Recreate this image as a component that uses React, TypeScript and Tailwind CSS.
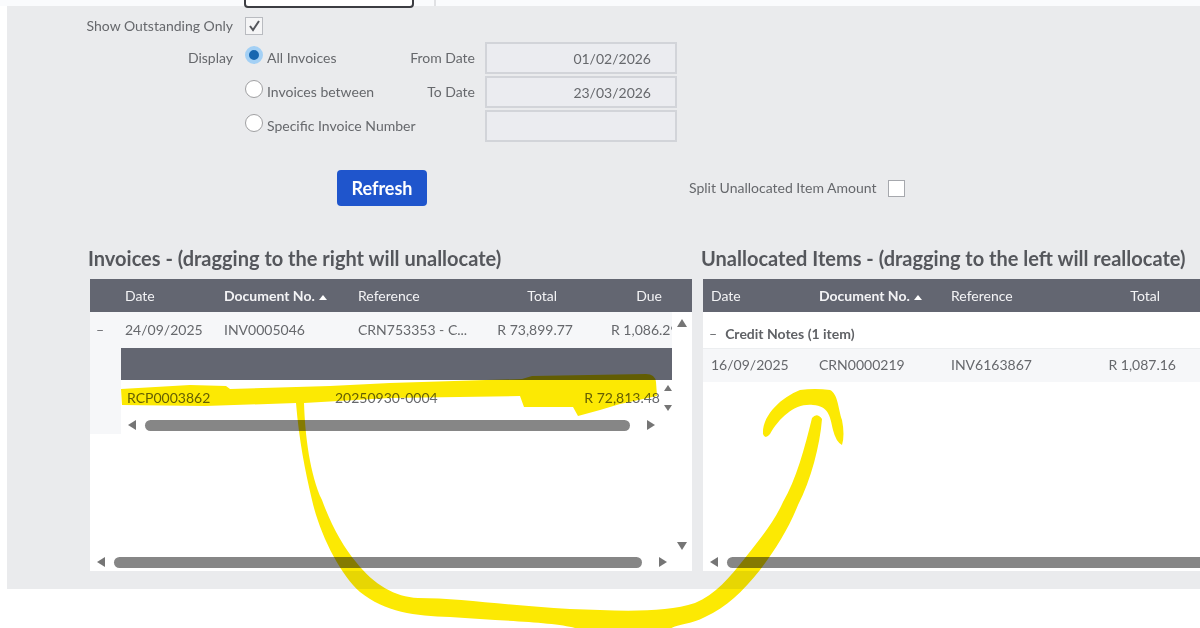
import type { ReactNode } from 'react';

type Direction = 'left' | 'right' | 'up' | 'down';

const arrows: Record<Direction, string> = {
  left: 'M9 0 L9 10 L1 5 Z',
  right: 'M1 0 L1 10 L9 5 Z',
  up: 'M0 9 L10 9 L5 1 Z',
  down: 'M0 1 L10 1 L5 9 Z',
};

const Arrow = ({ direction }: { direction: Direction }) => (
  <svg viewBox="0 0 10 10" className="size-2.5 shrink-0 fill-[#757575]">
    <path d={arrows[direction]} />
  </svg>
);

const HorizontalScroll = ({ className }: { className: string }) => (
  <div className={`flex h-[18px] items-center ${className}`}>
    <Arrow direction="left" />
    <div className="mr-4 ml-2 h-[11px] flex-1 rounded-full bg-[#868686]" />
    <Arrow direction="right" />
  </div>
);

const SortIcon = () => (
  <svg viewBox="0 0 8 6" className="ml-1 inline-block h-1.5 w-2 fill-white">
    <path d="M0 6 L4 1 L8 6 Z" />
  </svg>
);

const DateField = ({
  id,
  label,
  value,
}: {
  id: string;
  label: string;
  value: string;
}) => (
  <div className="grid grid-cols-[92px_192px] items-center gap-x-2.5">
    <label htmlFor={id} className="text-right">
      {label}
    </label>
    <input
      id={id}
      type="text"
      aria-label={label || 'Invoice number'}
      defaultValue={value}
      className="h-8 w-full border-2 border-[#d2d4d9] bg-[#ebecf0] pr-6 text-right"
    />
  </div>
);

const DisplayOption = ({
  label,
  checked,
}: {
  label: string;
  checked?: boolean;
}) => (
  <label className="flex items-center gap-1 pl-3 whitespace-nowrap">
    <input
      type="radio"
      name="display"
      defaultChecked={checked}
      className="mb-1.5 size-[18px] shrink-0 appearance-none rounded-full border border-[#a0a0a2] bg-white checked:border-4 checked:border-[#a3d0f5] checked:bg-[#1767b0]"
    />
    {label}
  </label>
);

const Panel = ({ title, children }: { title: string; children: ReactNode }) => (
  <section className="min-w-0">
    <h2 className="mb-[9px] text-xl leading-6 font-bold whitespace-nowrap text-[#55575c]">
      {title}
    </h2>
    <div className="ml-0.5 flex h-[292px] flex-col bg-white">{children}</div>
  </section>
);

const InvoiceColumns = () => (
  <colgroup>
    <col className="w-[35px]" />
    <col className="w-[99px]" />
    <col className="w-[134px]" />
    <col />
    <col className="w-[104px]" />
    <col className="w-[99px]" />
  </colgroup>
);

const InvoicesGrid = () => (
  <>
    <div className="bg-[#636671] pr-5">
      <table className="w-full table-fixed text-left text-[#f3f3f5]">
        <InvoiceColumns />
        <thead>
          <tr className="h-[33px]">
            <th />
            <th className="font-normal">Date</th>
            <th className="font-bold">
              Document No.
              <SortIcon />
            </th>
            <th className="font-normal">Reference</th>
            <th className="pr-4 text-right font-normal">Total</th>
            <th className="pr-2.5 text-right font-normal">Due</th>
          </tr>
        </thead>
      </table>
    </div>
    <div className="flex flex-1">
      <div className="min-w-0 flex-1">
        <table className="w-full table-fixed bg-[#f6f7f9] whitespace-nowrap">
          <InvoiceColumns />
          <tbody>
            <tr className="h-9">
              <td className="pl-1.5">
                <button type="button" aria-label="Collapse">
                  –
                </button>
              </td>
              <td>24/09/2025</td>
              <td>INV0005046</td>
              <td>CRN753353 - C...</td>
              <td className="text-right">R 73,899.77</td>
              <td className="overflow-hidden pl-[38px]">R 1,086.29</td>
            </tr>
            <tr>
              <td />
              <td colSpan={5}>
                <AllocationGrid />
              </td>
            </tr>
          </tbody>
        </table>
      </div>
      <div className="flex w-5 flex-col items-center justify-between pt-1.5 pb-0.5">
        <Arrow direction="up" />
        <Arrow direction="down" />
      </div>
    </div>
    <HorizontalScroll className="mr-6 ml-1.5" />
  </>
);

const AllocationGrid = () => (
  <div className="-ml-1 bg-white">
    <div className="h-8 bg-[#636671]" />
    <div className="flex h-9">
      <table className="flex-1 table-fixed">
        <tbody>
          <tr>
            <td className="w-[214px] pl-1.5">RCP0003862</td>
            <td>20250930-0004</td>
            <td className="text-right">R 72,813.48</td>
          </tr>
        </tbody>
      </table>
      <div className="flex w-3 flex-col items-end justify-center gap-3">
        <svg viewBox="0 0 8 8" className="size-2 fill-[#757575]">
          <path d="M0 7 L4 1 L8 7 Z" />
        </svg>
        <svg viewBox="0 0 8 8" className="size-2 fill-[#757575]">
          <path d="M0 1 L8 1 L4 7 Z" />
        </svg>
      </div>
    </div>
    <HorizontalScroll className="mr-4 ml-1.5" />
  </div>
);

const ItemsGrid = () => (
  <>
    <table className="w-full table-fixed text-left">
      <colgroup>
        <col className="w-[116px]" />
        <col className="w-[132px]" />
        <col />
        <col className="w-[112px]" />
      </colgroup>
      <thead className="bg-[#636671] text-[#f3f3f5]">
        <tr className="h-[33px]">
          <th className="pl-2 font-normal">Date</th>
          <th className="font-bold">
            Document No.
            <SortIcon />
          </th>
          <th className="font-normal">Reference</th>
          <th className="pr-10 text-right font-normal">Total</th>
        </tr>
      </thead>
      <tbody>
        <tr className="h-9 border-b border-[#eceef0]">
          <td colSpan={4} className="pt-2 pl-1.5 font-bold text-[#606266]">
            <button
              type="button"
              aria-label="Collapse"
              className="mr-2 font-normal"
            >
              –
            </button>
            Credit Notes (1 item)
          </td>
        </tr>
        <tr className="h-[34px] bg-[#f6f7f9]">
          <td className="pl-2">16/09/2025</td>
          <td>CRN0000219</td>
          <td>INV6163867</td>
          <td className="pr-6 text-right">R 1,087.16</td>
        </tr>
      </tbody>
    </table>
    <div className="mt-auto flex h-[18px] items-center pl-1.5">
      <Arrow direction="left" />
      <div className="ml-2 h-[11px] flex-1 rounded-l-full bg-[#868686]" />
    </div>
  </>
);

// Highlighter strokes: marked receipt row, and the arrow to the credit notes
const Marker = () => (
  <svg
    width="1200"
    height="628"
    viewBox="0 0 1200 628"
    className="pointer-events-none absolute top-0 left-0 fill-[#fce903] mix-blend-multiply"
  >
    <path d="M121 389 L190 385 L226 386 L230 389 L330 386 L390 383 L522 379 L532 376 L646 374 Q655 374 656 382 L657 396 L620 404 L600 410 L578 416 L573 407 L524 407 L520 396 L390 398 L304 403 C305 435 310 475 322 500 C331 525 344 548 356 562 C374 585 395 597 418 598 C460 598 510 606 570 609 C620 611 665 613 695 603 C715 595 730 577 745 558 C762 537 775 520 783 502 C796 480 805 447 812 418 Q817 412 822 419 C820 445 811 480 798 505 C788 530 775 550 760 570 C742 592 727 607 705 617 C690 625 676 624 670 629 L578 629 C560 622 500 621 450 617 C415 616 385 612 360 592 C340 574 320 535 312 500 C305 470 299 440 296 403 L205 406 L122 405 Z" />
    <path d="M763 434 C762 415 782 397 800 390 Q815 388 830 390 C838 394 838 408 842 420 Q845 435 842 445 Q836 442 833 430 C830 415 828 406 813 405 C795 403 780 417 770 434 Q765 440 763 434 Z" />
  </svg>
);

const App = () => {
  return (
    <div className="relative isolate min-h-screen overflow-hidden bg-white font-[Lato,sans-serif] text-sm leading-5 text-[#66686c]">
      <header className="flex h-1.5 items-end bg-[#fafbfd] pl-[244px]">
        <input
          type="text"
          aria-label="Account"
          className="z-10 -mb-0.5 h-8 w-[170px] rounded-sm border-2 border-[#3c3d42] bg-white"
        />
        <div className="h-8 w-[22px] border-r-2 border-[#e0e1e4]" />
      </header>
      <main className="ml-[7px] bg-[#eaebed] pt-2.5 pb-[18px]">
        <form>
          <div className="grid grid-cols-[226px_1fr] items-center gap-x-3">
            <label htmlFor="outstanding" className="text-right">
              Show Outstanding Only
            </label>
            <span className="grid size-[18px]">
              <input
                id="outstanding"
                type="checkbox"
                defaultChecked
                className="col-start-1 row-start-1 appearance-none border border-[#b9bbc0] bg-[#f5f5f6]"
              />
              <svg
                viewBox="0 0 18 18"
                className="pointer-events-none col-start-1 row-start-1 fill-none stroke-[#55575c] stroke-2"
              >
                <path d="M5 9 L8 13 L14 4" />
              </svg>
            </span>
          </div>
          <div className="mt-1.5 grid grid-cols-[226px_150px_1fr] items-center gap-y-0.5">
            <span className="text-right">Display</span>
            <DisplayOption label="All Invoices" checked />
            <DateField id="from" label="From Date" value="01/02/2026" />
            <span />
            <DisplayOption label="Invoices between" />
            <DateField id="to" label="To Date" value="23/03/2026" />
            <span />
            <DisplayOption label="Specific Invoice Number" />
            <DateField id="number" label="" value="" />
          </div>
          <div className="mt-7 flex items-center pl-[330px]">
            <button
              type="button"
              className="h-9 w-[90px] rounded-sm bg-[#1f55cc] text-lg font-bold text-white"
            >
              Refresh
            </button>
            <label className="ml-[262px] flex items-center gap-3">
              Split Unallocated Item Amount
              <input
                type="checkbox"
                className="size-[17px] appearance-none border border-[#a6a8ad] bg-white"
              />
            </label>
          </div>
        </form>
        <div className="mt-10 grid grid-cols-[604fr_499fr] gap-[9px] pl-[81px]">
          <Panel title="Invoices - (dragging to the right will unallocate)">
            <InvoicesGrid />
          </Panel>
          <Panel title="Unallocated Items - (dragging to the left will reallocate)">
            <ItemsGrid />
          </Panel>
        </div>
      </main>
      <Marker />
    </div>
  );
};

export default App;
